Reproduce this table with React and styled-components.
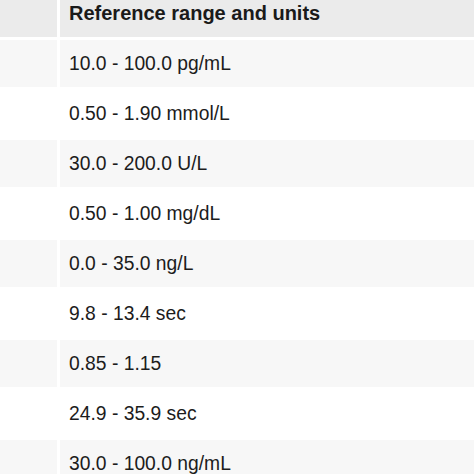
import React from "react";
import styled, { createGlobalStyle } from "styled-components";

const GlobalStyle = createGlobalStyle`
  html, body {
    margin: 0;
    padding: 0;
    background: #ffffff;
    overflow: hidden;
  }
  body {
    font-family: "Liberation Sans", Arial, sans-serif;
  }
`;

const rows = [
  "10.0 - 100.0 pg/mL",
  "0.50 - 1.90 mmol/L",
  "30.0 - 200.0 U/L",
  "0.50 - 1.00 mg/dL",
  "0.0 - 35.0 ng/L",
  "9.8 - 13.4 sec",
  "0.85 - 1.15",
  "24.9 - 35.9 sec",
  "30.0 - 100.0 ng/mL",
];

const Table = styled.table`
  width: calc(100% + 6px);
  margin: -13px -3px 0 -3px;
  border-collapse: separate;
  border-spacing: 3px;
  color: #1c1c1c;
  font-size: 19.3px;
`;

const HeadCell = styled.th`
  height: 47px;
  padding: 0 0 0 9px;
  background: #ebebeb;
  font-weight: bold;
  font-size: 20px;
  text-align: left;
  vertical-align: middle;
  color: #1a1a1a;
  width: ${(p) => (p.$narrow ? "57px" : "auto")};
  box-sizing: border-box;
`;

const Cell = styled.td`
  height: 47px;
  padding: 1px 0 0 9px;
  box-sizing: border-box;
  background: ${(p) => (p.$shaded ? "#f7f7f7" : "#ffffff")};
  vertical-align: middle;
  white-space: nowrap;
`;

export default function App() {
  return (
    <>
      <GlobalStyle />
      <Table>
        <thead>
          <tr>
            <HeadCell $narrow />
            <HeadCell>Reference range and units</HeadCell>
          </tr>
        </thead>
        <tbody>
          {rows.map((r, i) => (
            <tr key={i}>
              <Cell $shaded={i % 2 === 0} />
              <Cell $shaded={i % 2 === 0}>{r}</Cell>
            </tr>
          ))}
        </tbody>
      </Table>
    </>
  );
}
